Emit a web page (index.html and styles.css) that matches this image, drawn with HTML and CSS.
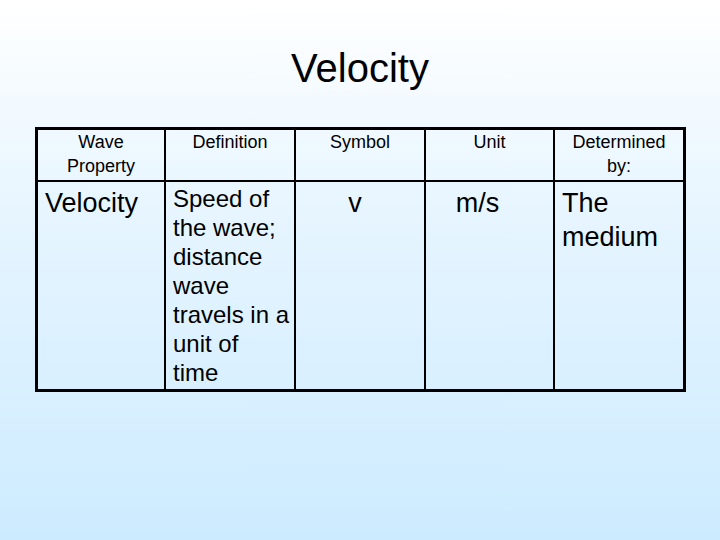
FILE: index.html
```html
<!DOCTYPE html>
<html>
<head>
<meta charset="utf-8">
<link rel="stylesheet" href="styles.css">
</head>
<body>
<div class="slide">
  <h1 class="title">Velocity</h1>
  <table class="grid">
    <thead>
      <tr>
        <th class="c1">Wave<br>Property</th>
        <th class="c2">Definition</th>
        <th class="c3">Symbol</th>
        <th class="c4">Unit</th>
        <th class="c5">Determined<br>by:</th>
      </tr>
    </thead>
    <tbody>
      <tr>
        <td class="big">Velocity</td>
        <td class="small">Speed of<br>the wave;<br>distance<br>wave<br>travels in a<br>unit of<br>time</td>
        <td class="big sym">v</td>
        <td class="big unit">m/s</td>
        <td class="big">The<br>medium</td>
      </tr>
    </tbody>
  </table>
</div>
</body>
</html>
```
FILE: styles.css
```css
html, body {
  margin: 0;
  padding: 0;
}
body {
  width: 720px;
  height: 540px;
  background: linear-gradient(to bottom, #ffffff 0%, #e6f5ff 40%, #cdebff 100%);
  font-family: "Liberation Sans", Arial, sans-serif;
  color: #000;
}
.slide {
  display: flex;
  flex-direction: column;
  align-items: flex-start;
  padding: 44px 0 0 35px;
}
.title {
  align-self: stretch;
  margin: 0 35px 35px 0;
  font-weight: normal;
  font-size: 40px;
  line-height: 48px;
  text-align: center;
}
.grid {
  border-collapse: separate;
  border-spacing: 0;
  border: 3px solid #000;
  table-layout: fixed;
  width: 651px;
}
.grid th, .grid td {
  box-sizing: border-box;
  border-right: 2px solid #000;
  vertical-align: top;
}
.grid th:last-child, .grid td:last-child {
  border-right: none;
}
.grid th {
  font-weight: normal;
  font-size: 18px;
  line-height: 24px;
  text-align: center;
  padding: 0 0 2px;
  border-bottom: 2px solid #000;
}
.c1 { width: 128px; }
.c2 { width: 130px; }
.c3 { width: 130px; }
.c4 { width: 129px; }
.c5 { width: 128px; }
.grid td {
  padding: 4px 4px 0 7px;
  text-align: left;
}
.big {
  font-size: 27px;
  line-height: 34px;
}
.grid td.small {
  font-size: 24px;
  line-height: 29px;
  padding-top: 2px;
  padding-bottom: 2px;
}
.grid td.sym {
  text-align: center;
  padding-left: 0;
  padding-right: 10px;
}
.grid td.unit {
  text-align: center;
  padding-left: 0;
  padding-right: 24px;
}
```
